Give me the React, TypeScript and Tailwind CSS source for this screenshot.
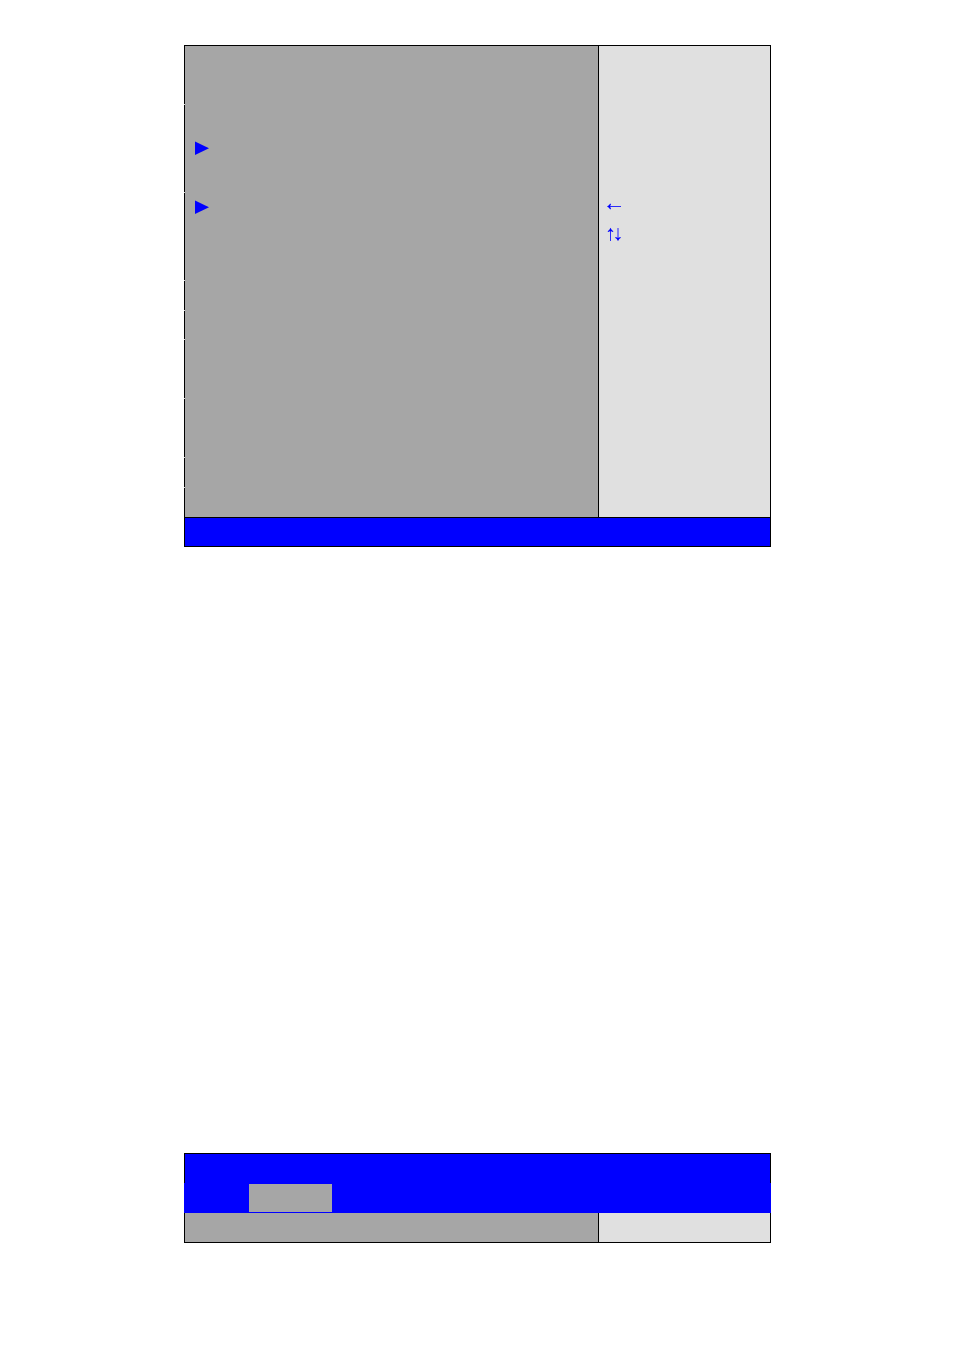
import React from "react";

type Row = { height: string; marker?: string };

const rows: Row[] = [
  { height: "h-[58px]" },
  { height: "h-[87px]", marker: "pt-[29px]" },
  { height: "h-[87px]", marker: "pt-0" },
  { height: "h-[29px]" },
  { height: "h-[28px]" },
  { height: "h-[58px]" },
  { height: "h-[58px]" },
  { height: "h-[29px]" },
  { height: "h-[29px]" },
];

function SubmenuMarker() {
  return (
    <div className="flex h-7 items-center text-[#0000ff]">
      <svg width="14" height="14" viewBox="0 0 14 14" fill="currentColor" aria-hidden="true">
        <path d="M0 0.6L14 7.2L0 14Z" />
      </svg>
    </div>
  );
}

function LeftArrow() {
  return (
    <svg width="14" height="14" viewBox="0 0 14 14" fill="currentColor" aria-hidden="true">
      <path d="M3 7H14V8H3Z" opacity="0.8" />
      <path d="M0 7.5Q2.2 6.6 3.2 4.6L4 5.2L3 7.5L4 9.8L3.2 10.4Q2.2 8.4 0 7.5Z" />
    </svg>
  );
}

function UpDownArrows() {
  return (
    <svg width="15" height="14" viewBox="0 0 15 14" fill="currentColor" aria-hidden="true">
      <path d="M3 4H4V14H3Z" opacity="0.8" />
      <path d="M3.5 0.8Q4.4 3.2 6.4 4.2L5.8 5L3.5 4L1.2 5L0.6 4.2Q2.6 3.2 3.5 0.8Z" />
      <path d="M10 1H12V11H10Z" opacity="0.42" />
      <path d="M11 14.2Q11.9 11.8 13.9 10.8L13.3 10L11 11L8.7 10L8.1 10.8Q10.1 11.8 11 14.2Z" />
    </svg>
  );
}

function SettingsPanel() {
  return (
    <section className="border-y border-black">
      <div className="grid grid-cols-[minmax(0,1fr)_173px]">
        <div className="flex flex-col bg-[#a6a6a6]">
          {rows.map((row, i) => (
            <React.Fragment key={i}>
              {i > 0 && <div className="h-px border-l border-[#d4d4d4]" />}
              <div className={`border-l border-black pl-[10px] ${row.height} ${row.marker ?? ""}`}>
                {row.marker && <SubmenuMarker />}
              </div>
            </React.Fragment>
          ))}
        </div>
        <aside className="border-x border-black bg-[#e0e0e0] pt-[146px] pl-2 text-[#0000ff]">
          <div className="flex h-7 items-center">
            <LeftArrow />
          </div>
          <div className="flex h-7 items-center">
            <UpDownArrows />
          </div>
        </aside>
      </div>
      <footer className="h-[29px] border border-b-0 border-black bg-[#0000ff]" />
    </section>
  );
}

function MenuPanel() {
  return (
    <section>
      <header className="h-[30px] border border-b-0 border-black bg-[#0000ff]" />
      <div className="flex h-[30px] bg-[#0000ff] py-px pl-[65px]">
        <div className="w-[83px] bg-[#a6a6a6]" />
      </div>
      <div className="grid h-[30px] grid-cols-[minmax(0,1fr)_173px] border-b border-black">
        <div className="border-l border-black bg-[#a6a6a6]" />
        <div className="border-x border-black bg-[#e0e0e0]" />
      </div>
    </section>
  );
}

export default function App() {
  return (
    <main className="flex min-h-screen flex-col gap-[606px] bg-white pt-[45px] pr-[183px] pb-10 pl-[184px]">
      <SettingsPanel />
      <MenuPanel />
    </main>
  );
}
